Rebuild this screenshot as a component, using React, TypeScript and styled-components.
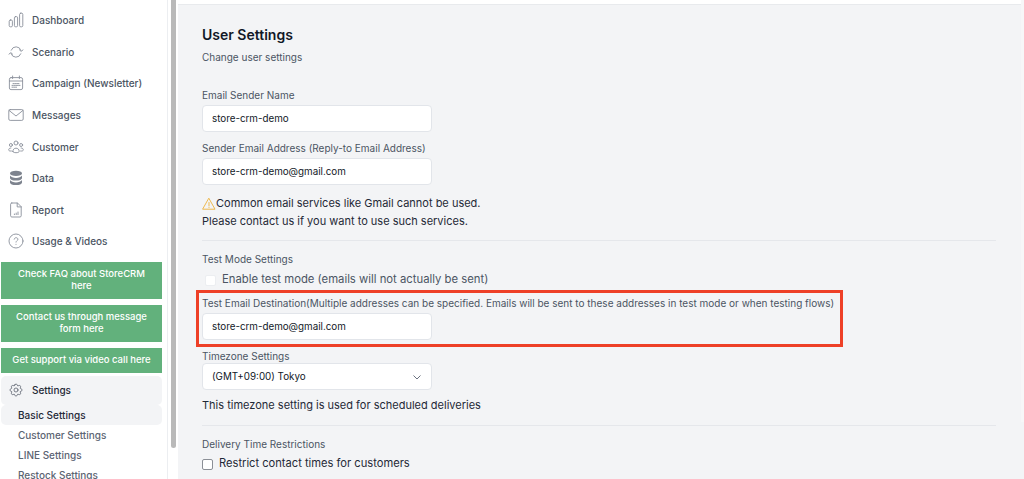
import React from 'react';
import styled, { createGlobalStyle } from 'styled-components';

const GlobalStyle = createGlobalStyle`
  html, body {
    margin: 0;
    padding: 0;
    height: 100%;
    overflow: hidden;
    background: #f3f4f6;
    font-family: Inter, "Noto Sans", sans-serif;
    -webkit-font-smoothing: antialiased;
  }
  * { box-sizing: border-box; }
`;

const iconColor = '#8a909b';

const Svg = ({ children, w = 16 }: { children: React.ReactNode; w?: number }) => (
  <svg width={w} height="16" viewBox="0 0 16 16" fill="none" stroke={iconColor} strokeWidth="0.9" strokeLinecap="round" strokeLinejoin="round">
    {children}
  </svg>
);

const BarsIcon = () => (
  <Svg>
    <rect x="1.2" y="8" width="3.2" height="6.8" rx="1.2" />
    <rect x="6.4" y="4.6" width="3.2" height="10.2" rx="1.2" />
    <rect x="11.6" y="1.2" width="3.2" height="13.6" rx="1.2" />
  </Svg>
);

const LoopIcon = () => (
  <Svg>
    <path d="M3.2 6.2A5.2 5.2 0 0 1 13 6.4" />
    <path d="M11.4 5.8L13.1 7.4L15 5.9" />
    <path d="M12.8 9.8A5.2 5.2 0 0 1 3 9.6" />
    <path d="M1 10.1L2.9 8.6L4.6 10.2" />
  </Svg>
);

const CalendarIcon = () => (
  <Svg>
    <rect x="1.4" y="2.6" width="13.2" height="12" rx="1.6" />
    <path d="M1.4 6h13.2M4.6 1v2.6M11.4 1v2.6" />
    <path d="M5 8.6h6M4 10.4h8M4 12.2h5" strokeDasharray="1 .8" />
  </Svg>
);

const MailIcon = () => (
  <Svg>
    <rect x="0.8" y="2.6" width="14.4" height="10.8" rx="1.4" />
    <path d="M1 3.4L8 9l7-5.6" />
  </Svg>
);

const PeopleIcon = () => (
  <Svg>
    <circle cx="8" cy="4" r="2" />
    <circle cx="2.9" cy="6" r="1.5" />
    <circle cx="13.1" cy="6" r="1.5" />
    <path d="M4.8 12.4c0-2 1.4-3.2 3.2-3.2s3.2 1.200 3.2 3.200c0 .8-1.400 1.300-3.200 1.300s-3.200-.5-3.200-1.300z" />
    <path d="M3.400 12H2.200C1.200 12 .7 11.500 .7 10.700c0-1 .9-1.700 2.200-1.700M12.600 12h1.200c1 0 1.500-.5 1.500-1.300 0-1-.9-1.700-2.200-1.700" />
  </Svg>
);

const DataIcon = () => (
  <svg width="16" height="16" viewBox="0 0 16 16" fill="#7d838e">
    <ellipse cx="8" cy="3.400" rx="6" ry="2.700" />
    <path d="M2 5.600c1 1.500 3.400 2.300 6 2.300s5-.8 6-2.300v2.300c0 1.500-2.700 2.700-6 2.700s-6-1.200-6-2.700z" />
    <path d="M2 10.100c1 1.500 3.400 2.300 6 2.300s5-.8 6-2.300v2.300c0 1.500-2.700 2.700-6 2.700s-6-1.200-6-2.700z" />
  </svg>
);

const ReportIcon = () => (
  <Svg>
    <path d="M3.800 1h5.700l3.700 3.700v9.100c0 .7-.5 1.200-1.200 1.200H3.800c-.7 0-1.200-.5-1.200-1.200V2.200C2.600 1.500 3.100 1 3.800 1z" />
    <path d="M9.200 1v3.900h4" />
    <path d="M6.400 12.600v-.6M8.200 12.600v-1.500M10 12.600v-2.600" />
  </Svg>
);

const HelpIcon = () => (
  <Svg>
    <circle cx="8" cy="8" r="7" />
    <path d="M6.200 6.200c.2-1 1-1.500 1.900-1.500 1 0 1.800.7 1.800 1.600 0 1.300-1.900 1.400-1.900 2.800" />
    <path d="M8 11.300v.1" />
  </Svg>
);

const CogIcon = () => (
  <svg width="16" height="16" viewBox="0 0 24 24" fill="none" stroke="#5b616d" strokeWidth="1.200" strokeLinecap="round" strokeLinejoin="round">
    <path d="M10.300 4.300c.4-1.800 3-1.800 3.400 0a1.700 1.700 0 0 0 2.600 1.100c1.500-.9 3.300.8 2.400 2.400a1.700 1.700 0 0 0 1.100 2.500c1.800.4 1.800 3 0 3.400a1.700 1.700 0 0 0-1.100 2.600c.9 1.500-.9 3.300-2.400 2.400a1.700 1.700 0 0 0-2.600 1.100c-.4 1.800-3 1.800-3.400 0a1.700 1.700 0 0 0-2.600-1.100c-1.500.9-3.300-.9-2.400-2.400a1.700 1.700 0 0 0-1.100-2.600c-1.800-.4-1.800-3 0-3.400a1.700 1.700 0 0 0 1.100-2.500c-.9-1.600.9-3.300 2.400-2.400a1.700 1.700 0 0 0 2.600-1.100z" />
    <circle cx="12" cy="12" r="3" />
  </svg>
);

const Page = styled.div`
  position: relative;
  display: flex;
  width: 1024px;
  height: 479px;
  overflow: hidden;
`;

const Sidebar = styled.aside`
  width: 168px;
  flex: none;
  background: #fff;
  border-right: 1px solid #eceef1;
  padding: 4.200px 5px 0 1px;
  display: flex;
  flex-direction: column;
`;

const NavList = styled.nav`
  display: flex;
  flex-direction: column;
  margin-bottom: 4.600px;
`;

const NavItem = styled.div`
  height: 31.650px;
  flex: none;
  display: flex;
  align-items: center;
  gap: 8px;
  padding-left: 7px;
  color: #4b5563;
  font-size: 10px;
  font-weight: 500;
`;

const GreenButton = styled.div<{ $last?: boolean }>`
  flex: none;
  background: #62b17c;
  color: #fff;
  font-size: 9.500px;
  font-weight: 500;
  line-height: 12px;
  text-align: center;
  padding: 6.500px 10px;
  margin-bottom: ${({ $last }) => ($last ? 3 : 6)}px;
`;

const SettingsHead = styled.div`
  height: 29px;
  flex: none;
  display: flex;
  align-items: center;
  gap: 8px;
  padding-left: 7px;
  background: #f3f4f6;
  border-radius: 5px;
  color: #1f2937;
  font-size: 10px;
  font-weight: 500;
`;

const SubItem = styled.div<{ $active?: boolean }>`
  height: 20px;
  flex: none;
  display: flex;
  align-items: center;
  padding-left: 17px;
  font-size: 10px;
  font-weight: 500;
  color: ${({ $active }) => ($active ? '#1f2937' : '#5b6472')};
  background: ${({ $active }) => ($active ? '#f3f4f6' : 'transparent')};
  border-radius: 5px;
`;

const ScrollTrack = styled.div`
  width: 10px;
  flex: none;
  background: #fff;
  padding: 0 2px 0 3px;
`;

const ScrollThumb = styled.div`
  height: 448px;
  background: #b9b9b9;
  border-radius: 0 0 3px 3px;
`;

const Main = styled.main`
  flex: 1;
  min-width: 0;
  padding: 0 25px 0 24px;
  border-top: 4px solid #fff;
  box-shadow: inset 0 1px 0 #e8eaed;
`;

const Title = styled.h1`
  margin: 21px 0 0;
  font-size: 14px;
  line-height: 20px;
  font-weight: 600;
  color: #111827;
`;

const Subtitle = styled.p`
  margin: 5px 0 0;
  font-size: 10px;
  line-height: 14px;
  color: #4b5563;
`;

const Label = styled.label<{ $top?: number }>`
  display: block;
  margin-top: ${({ $top }) => $top ?? 0}px;
  font-size: 10px;
  line-height: 14px;
  font-weight: 400;
  color: #4b5563;
`;

const Field = styled.div<{ $flush?: boolean }>`
  width: 230px;
  height: 27px;
  margin-top: ${({ $flush }) => ($flush ? 0 : 3)}px;
  padding: 0 9px;
  display: flex;
  align-items: center;
  justify-content: space-between;
  background: #fff;
  border: 1px solid #e2e5ea;
  border-radius: 4px;
  font-size: 9.800px;
  color: #111827;
`;

const BodyText = styled.p<{ $top?: number }>`
  margin: ${({ $top }) => $top ?? 0}px 0 0;
  font-size: 11px;
  line-height: 17.500px;
  color: #1f2937;
`;

const Warning = styled(BodyText)`
  display: flex;
  align-items: center;
`;

const Divider = styled.hr<{ $top: number }>`
  margin: ${({ $top }) => $top}px 0 0;
  border: 0;
  border-top: 1px solid #e5e7eb;
`;

const CheckRow = styled.div<{ $indent?: number; $gap: number; $size: number; $dim?: boolean }>`
  display: flex;
  align-items: center;
  gap: ${({ $gap }) => $gap}px;
  margin: 4.500px 0 0 ${({ $indent }) => $indent ?? 0}px;
  font-size: ${({ $size }) => $size}px;
  line-height: 17px;
  color: ${({ $dim }) => ($dim ? '#4b5563' : '#1f2937')};
`;

const Checkbox = styled.span<{ $light?: boolean }>`
  width: 11px;
  height: 11px;
  margin-top: 2px;
  background: #fff;
  border: 1px solid ${({ $light }) => ($light ? '#eceef1' : '#8b8f96')};
  border-radius: 2px;
`;

const Highlight = styled.div`
  position: absolute;
  left: 196px;
  top: 290px;
  width: 647px;
  height: 57px;
  border: 3px solid #ee4027;
`;

const PageScrollbar = styled.div`
  width: 3px;
  flex: none;
  background: #f7f7f8;
  margin-bottom: 57px;
`;

const navItems = [
  { label: 'Dashboard', icon: <BarsIcon /> },
  { label: 'Scenario', icon: <LoopIcon /> },
  { label: 'Campaign (Newsletter)', icon: <CalendarIcon /> },
  { label: 'Messages', icon: <MailIcon /> },
  { label: 'Customer', icon: <PeopleIcon /> },
  { label: 'Data', icon: <DataIcon /> },
  { label: 'Report', icon: <ReportIcon /> },
  { label: 'Usage & Videos', icon: <HelpIcon /> },
];

export default function App() {
  return (
    <>
      <GlobalStyle />
      <Page>
        <Sidebar>
          <NavList>
            {navItems.map((item) => (
              <NavItem key={item.label}>
                {item.icon}
                {item.label}
              </NavItem>
            ))}
          </NavList>
          <GreenButton>Check FAQ about StoreCRM here</GreenButton>
          <GreenButton>Contact us through message form here</GreenButton>
          <GreenButton $last>Get support via video call here</GreenButton>
          <SettingsHead>
            <CogIcon />
            Settings
          </SettingsHead>
          <SubItem $active>Basic Settings</SubItem>
          <SubItem>Customer Settings</SubItem>
          <SubItem>LINE Settings</SubItem>
          <SubItem>Restock Settings</SubItem>
        </Sidebar>
        <ScrollTrack>
          <ScrollThumb />
        </ScrollTrack>
        <Main>
          <Title>User Settings</Title>
          <Subtitle>Change user settings</Subtitle>
          <Label $top={24}>Email Sender Name</Label>
          <Field>store-crm-demo</Field>
          <Label $top={9}>Sender Email Address (Reply-to Email Address)</Label>
          <Field>store-crm-demo@gmail.com</Field>
          <Warning $top={10}>
            <svg width="14" height="14" viewBox="0 0 14 14" fill="none" stroke="#eeb94f" strokeWidth="1" strokeLinejoin="round" strokeLinecap="round">
              <path d="M7 1.500L13 12.200H1z" />
              <path d="M7 5.500v3.500M7 10.500v.1" />
            </svg>
            Common email services like Gmail cannot be used.
          </Warning>
          <BodyText>Please contact us if you want to use such services.</BodyText>
          <Divider $top={10} />
          <Label $top={11}>Test Mode Settings</Label>
          <CheckRow $indent={3} $gap={6} $size={11.300} $dim>
            <Checkbox $light />
            Enable test mode (emails will not actually be sent)
          </CheckRow>
          <Label $top={8.500}>
            Test Email Destination(Multiple addresses can be specified. Emails will be sent to these addresses in test mode or when testing flows)
          </Label>
          <Field>store-crm-demo@gmail.com</Field>
          <Label $top={9}>Timezone Settings</Label>
          <Field $flush>
            (GMT+09:00) Tokyo
            <svg width="10" height="10" viewBox="0 0 10 10" fill="none" stroke="#6b7280" strokeWidth="1">
              <path d="M1.500 3.500L5 7l3.500-3.500" />
            </svg>
          </Field>
          <BodyText $top={6.500}>This timezone setting is used for scheduled deliveries</BodyText>
          <Divider $top={10.500} />
          <Label $top={11}>Delivery Time Restrictions</Label>
          <CheckRow $gap={6} $size={11.150}>
            <Checkbox />
            Restrict contact times for customers
          </CheckRow>
        </Main>
        <PageScrollbar />
        <Highlight />
      </Page>
    </>
  );
}
